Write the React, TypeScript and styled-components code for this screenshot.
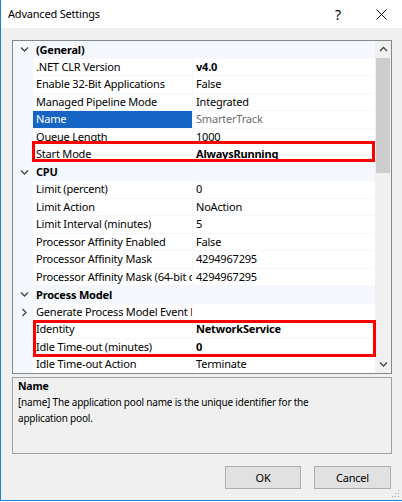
import React from "react";
import styled, { createGlobalStyle } from "styled-components";

const GlobalStyle = createGlobalStyle`
  html, body {
    margin: 0;
    padding: 0;
    background: #ffffff;
  }
  body {
    font-family: "Noto Sans", "Liberation Sans", sans-serif;
    font-size: 11px;
    letter-spacing: -0.2px;
    color: #000000;
  }
`;

const LINE = "#f4f7fc";

const Window = styled.div`
  position: relative;
  width: 402px;
  height: 501px;
  box-sizing: border-box;
  border-left: 1px solid #1883d7;
  border-bottom: 1px solid #1883d7;
  background: #f0f0f0;
  display: flex;
  flex-direction: column;
`;

const TitleBar = styled.div`
  height: 28px;
  background: #ffffff;
  display: flex;
  align-items: center;
  padding-left: 7px;
`;

const Title = styled.span`
  flex: 1;
  font-size: 11px;
  line-height: 16px;
`;

const CaptionButton = styled.div<{ $w: number }>`
  width: ${(p) => p.$w}px;
  height: 28px;
  display: flex;
  align-items: center;
  justify-content: center;
  font-size: 14px;
  color: #000;
`;

const Body = styled.div`
  flex: 1;
  display: flex;
  flex-direction: column;
  padding: 12px 10px 0 11px;
`;

const GridBox = styled.div`
  position: relative;
  height: 334px;
  box-sizing: border-box;
  border: 1px solid #828790;
  background: #ffffff;
  display: flex;
`;

const List = styled.div`
  flex: 1;
  overflow: hidden;
`;

const Row = styled.div<{ $cat?: boolean }>`
  height: 17.5px;
  display: grid;
  grid-template-columns: 20px 160px 1fr;
  background: ${(p) => (p.$cat ? LINE : "#ffffff")};
  line-height: 16px;
`;

const Margin = styled.div`
  background: ${LINE};
  display: flex;
  align-items: center;
  justify-content: center;
  padding-left: 2px;
`;

const CatLabel = styled.div`
  grid-column: 2 / 4;
  font-weight: bold;
  padding-left: 3px;
  display: flex;
  align-items: center;
`;

const NameCell = styled.div<{ $sel?: boolean }>`
  box-sizing: border-box;
  padding-left: 3px;
  border-bottom: 1px solid ${LINE};
  border-right: 1px solid ${LINE};
  background: ${(p) => (p.$sel ? "#1664c4" : "transparent")};
  color: ${(p) => (p.$sel ? "#ffffff" : "#000000")};
  white-space: nowrap;
  overflow: hidden;
  display: flex;
  align-items: center;
`;

const ValueCell = styled.div<{ $bold?: boolean; $ro?: boolean }>`
  box-sizing: border-box;
  padding-left: 3px;
  border-bottom: 1px solid ${LINE};
  font-weight: ${(p) => (p.$bold ? "bold" : "normal")};
  color: ${(p) => (p.$ro ? "#6d6d6d" : "#000000")};
  white-space: nowrap;
  overflow: hidden;
  display: flex;
  align-items: center;
`;

const ScrollBar = styled.div`
  width: 16px;
  background: #f0f0f0;
  display: flex;
  flex-direction: column;
`;

const ScrollArrow = styled.div`
  height: 17px;
  display: flex;
  align-items: center;
  justify-content: center;
`;

const Thumb = styled.div`
  height: 115px;
  margin: 0 1px;
  background: #cdcdcd;
`;

const Track = styled.div`
  flex: 1;
`;

const Mark = styled.div`
  position: absolute;
  box-sizing: border-box;
  border: 3px solid #ff0000;
  pointer-events: none;
`;

const Description = styled.div`
  margin-top: 3px;
  height: 77px;
  box-sizing: border-box;
  border: 1px solid #a0a0a0;
  padding: 0 5px;
  font-size: 10px;
  line-height: 16px;
`;

const DescTitle = styled.div`
  font-weight: bold;
  font-size: 10.5px;
`;

const ButtonRow = styled.div`
  margin-top: 12px;
  display: flex;
  justify-content: flex-end;
  gap: 13px;
  padding-right: 1px;
`;

const Button = styled.div<{ $w: number }>`
  width: ${(p) => p.$w}px;
  height: 23px;
  box-sizing: border-box;
  border: 1px solid #adadad;
  background: #e1e1e1;
  display: flex;
  align-items: center;
  justify-content: center;
`;

const Grip = styled.svg`
  position: absolute;
  right: 2px;
  bottom: 2px;
`;

type Item =
  | { kind: "cat"; label: string }
  | {
      kind: "prop";
      name: string;
      value: string;
      bold?: boolean;
      selected?: boolean;
      readOnly?: boolean;
      expandable?: boolean;
    };

const items: Item[] = [
  { kind: "cat", label: "(General)" },
  { kind: "prop", name: ".NET CLR Version", value: "v4.0", bold: true },
  { kind: "prop", name: "Enable 32-Bit Applications", value: "False" },
  { kind: "prop", name: "Managed Pipeline Mode", value: "Integrated" },
  { kind: "prop", name: "Name", value: "SmarterTrack", selected: true, readOnly: true },
  { kind: "prop", name: "Queue Length", value: "1000" },
  { kind: "prop", name: "Start Mode", value: "AlwaysRunning", bold: true },
  { kind: "cat", label: "CPU" },
  { kind: "prop", name: "Limit (percent)", value: "0" },
  { kind: "prop", name: "Limit Action", value: "NoAction" },
  { kind: "prop", name: "Limit Interval (minutes)", value: "5" },
  { kind: "prop", name: "Processor Affinity Enabled", value: "False" },
  { kind: "prop", name: "Processor Affinity Mask", value: "4294967295" },
  { kind: "prop", name: "Processor Affinity Mask (64-bit option)", value: "4294967295" },
  { kind: "cat", label: "Process Model" },
  { kind: "prop", name: "Generate Process Model Event Log Entry", value: "", expandable: true },
  { kind: "prop", name: "Identity", value: "NetworkService", bold: true },
  { kind: "prop", name: "Idle Time-out (minutes)", value: "0", bold: true },
  { kind: "prop", name: "Idle Time-out Action", value: "Terminate" },
];

const Chevron = ({ dir }: { dir: "down" | "right" | "up" }) => {
  const d =
    dir === "down" ? "M1 2.5 L4.5 6 L8 2.5" : dir === "up" ? "M1 6 L4.5 2.5 L8 6" : "M2.5 1 L6 4.5 L2.5 8";
  return (
    <svg width="9" height="9" viewBox="0 0 9 9">
      <path d={d} fill="none" stroke="#444" strokeWidth="1.3" />
    </svg>
  );
};

const App = () => {
  return (
    <>
      <GlobalStyle />
      <Window>
        <TitleBar>
          <Title>Advanced Settings</Title>
          <CaptionButton $w={44}>?</CaptionButton>
          <CaptionButton $w={42}>
            <svg width="11" height="11" viewBox="0 0 11 11">
              <path d="M0.5 0.5 L10.5 10.5 M10.5 0.5 L0.5 10.5" stroke="#000" strokeWidth="1" />
            </svg>
          </CaptionButton>
        </TitleBar>
        <Body>
          <GridBox>
            <List>
              {items.map((it, i) =>
                it.kind === "cat" ? (
                  <Row key={i} $cat>
                    <Margin>
                      <Chevron dir="down" />
                    </Margin>
                    <CatLabel>{it.label}</CatLabel>
                  </Row>
                ) : (
                  <Row key={i}>
                    <Margin>{it.expandable ? <Chevron dir="right" /> : null}</Margin>
                    <NameCell $sel={it.selected}>{it.name}</NameCell>
                    <ValueCell $bold={it.bold} $ro={it.readOnly}>
                      {it.value}
                    </ValueCell>
                  </Row>
                )
              )}
            </List>
            <ScrollBar>
              <ScrollArrow>
                <Chevron dir="up" />
              </ScrollArrow>
              <Thumb />
              <Track />
              <ScrollArrow>
                <Chevron dir="down" />
              </ScrollArrow>
            </ScrollBar>
            <Mark style={{ left: 19, top: 100, width: 343, height: 21 }} />
            <Mark style={{ left: 20, top: 279, width: 343, height: 37 }} />
          </GridBox>
          <Description>
            <DescTitle>Name</DescTitle>
            <div>
              [name] The application pool name is the unique identifier for the
              <br />
              application pool.
            </div>
          </Description>
          <ButtonRow>
            <Button $w={76}>OK</Button>
            <Button $w={77}>Cancel</Button>
          </ButtonRow>
        </Body>
        <Grip width="8" height="8" viewBox="0 0 8 8">
          <rect x="6" y="0" width="1" height="1" fill="#a0a0a0" />
          <rect x="3" y="3" width="1" height="1" fill="#a0a0a0" />
          <rect x="6" y="3" width="1" height="1" fill="#a0a0a0" />
          <rect x="0" y="6" width="1" height="1" fill="#a0a0a0" />
          <rect x="3" y="6" width="1" height="1" fill="#a0a0a0" />
          <rect x="6" y="6" width="1" height="1" fill="#a0a0a0" />
        </Grip>
      </Window>
    </>
  );
};

export default App;
